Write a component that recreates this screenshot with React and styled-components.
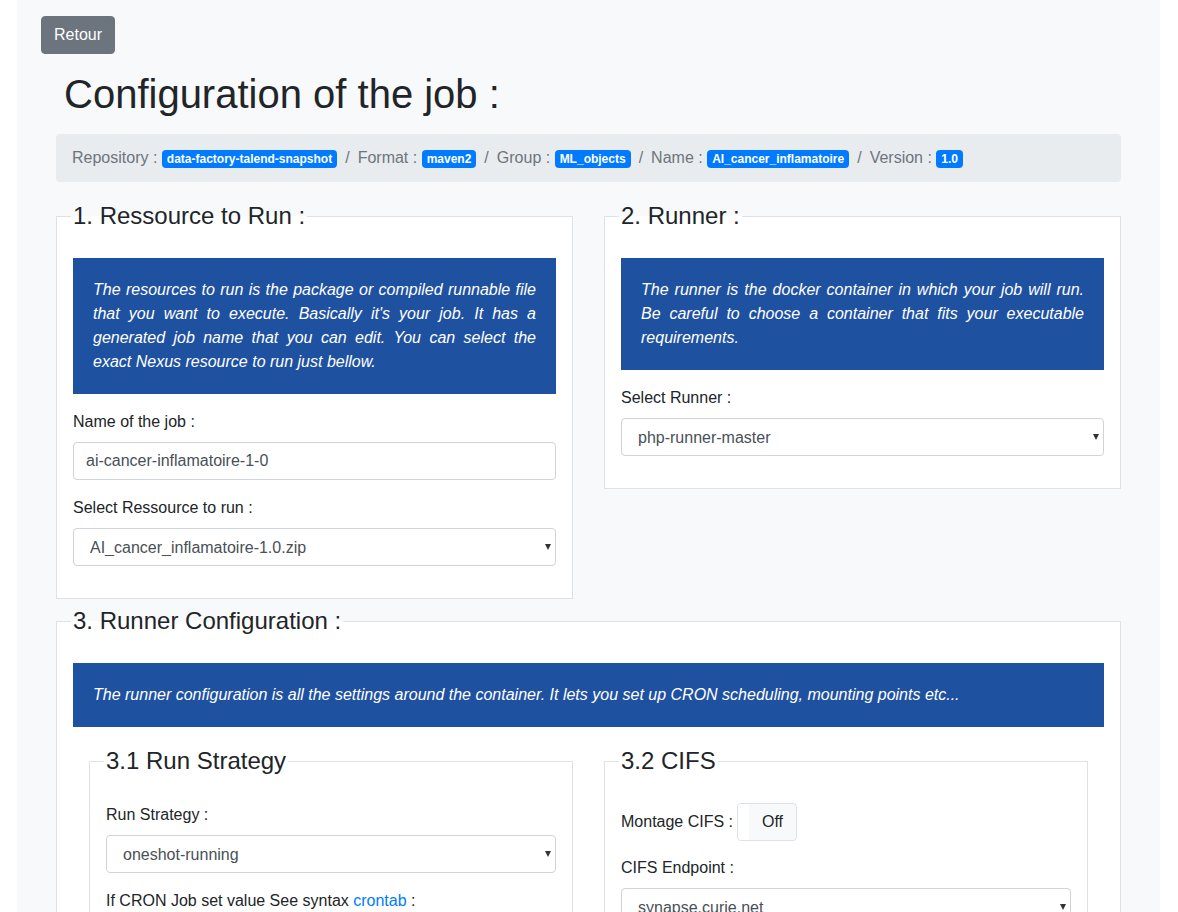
import React, { useState } from "react";
import styled, { createGlobalStyle } from "styled-components";

const GlobalStyle = createGlobalStyle`
  * { box-sizing: border-box; }
  body {
    margin: 0;
    background: #fff;
    font-family: "Liberation Sans", Arial, sans-serif;
    font-size: 16px;
    line-height: 1.5;
    color: #212529;
  }
`;

const Page = styled.div`
  margin-left: 17px;
  width: 1143px;
  min-height: 100vh;
  background: #f8f9fa;
  padding: 16px 24px 40px;
`;

const BackButton = styled.button`
  display: block;
  font-family: inherit;
  font-size: 16px;
  line-height: 24px;
  color: #fff;
  background: #6c757d;
  border: 1px solid #6c757d;
  border-radius: 4px;
  padding: 6px 12px;
  cursor: pointer;
`;

const Container = styled.div`
  padding: 0 15px;
`;

const Title = styled.h1`
  font-size: 40px;
  font-weight: 400;
  line-height: 48px;
  margin: 16px 0 16px 8px;
`;

const Breadcrumb = styled.ol`
  display: flex;
  flex-wrap: wrap;
  list-style: none;
  margin: 0 0 16px;
  padding: 12px 16px;
  background: #e9ecef;
  border-radius: 4px;
  color: #6c757d;
`;

const Crumb = styled.li`
  & + &::before {
    content: "/";
    padding: 0 8px;
  }
`;

const Badge = styled.span`
  display: inline-block;
  font-size: 12px;
  font-weight: 700;
  line-height: 1;
  padding: 3px 5px;
  color: #fff;
  background: #007bff;
  border-radius: 4px;
  vertical-align: baseline;
`;

const Row = styled.div`
  display: grid;
  grid-template-columns: 1fr 1fr;
  column-gap: 31px;
  align-items: start;
  margin-bottom: ${(p) => p.$mb || 0}px;
  padding: 0 ${(p) => p.$inset || 0}px;
`;

const Fieldset = styled.fieldset`
  margin: 0;
  min-width: 0;
  padding: 16px;
  background: #fff;
  border: 1px solid #dee2e6;
`;

const Legend = styled.legend`
  font-size: 24px;
  line-height: 36px;
  padding: 0 2px;
  margin: 0 0 8px -2px;
`;

const Info = styled.div`
  background: #1f51a1;
  color: #fff;
  font-style: italic;
  text-align: justify;
  padding: 20px;
  margin-bottom: 16px;
`;

const Group = styled.div`
  margin-bottom: 16px;
`;

const Label = styled.label`
  display: block;
  margin-bottom: 8px;
`;

const Link = styled.a`
  color: #007bff;
  text-decoration: none;
`;

const Input = styled.input`
  display: block;
  width: 100%;
  height: 38px;
  padding: 6px 12px;
  font-family: inherit;
  font-size: 16px;
  color: #495057;
  background: #fff;
  border: 1px solid #ced4da;
  border-radius: 4px;
`;

const SelectWrap = styled.div`
  position: relative;
  &::after {
    content: "";
    position: absolute;
    right: 5px;
    top: 16px;
    border-left: 3.5px solid transparent;
    border-right: 3.5px solid transparent;
    border-top: 6px solid #333;
    pointer-events: none;
  }
`;

const Select = styled.select`
  display: block;
  width: 100%;
  height: 38px;
  padding: 6px 24px 6px 16px;
  font-family: inherit;
  font-size: 16px;
  color: #495057;
  background: #fff;
  border: 1px solid #ced4da;
  border-radius: 4px;
  appearance: none;
`;

const ToggleRow = styled.div`
  display: flex;
  align-items: center;
  gap: 4px;
  margin-bottom: 15px;
`;

const Toggle = styled.button`
  display: flex;
  width: 60px;
  height: 38px;
  padding: 0;
  border: 1px solid #dee2e6;
  border-radius: 4px;
  overflow: hidden;
  background: #f8f9fa;
  cursor: pointer;
  font-family: inherit;
  font-size: 16px;
  color: #212529;
`;

const Handle = styled.span`
  width: 11px;
  height: 100%;
  background: #fff;
`;

const ToggleText = styled.span`
  flex: 1;
  line-height: 36px;
  text-align: center;
`;

const Field = ({ label, children }) => (
  <Group>
    <Label>{label}</Label>
    {children}
  </Group>
);

const Dropdown = ({ value, options }) => (
  <SelectWrap>
    <Select defaultValue={value}>
      {options.map((o) => (
        <option key={o}>{o}</option>
      ))}
    </Select>
  </SelectWrap>
);

const crumbs = [
  ["Repository", "data-factory-talend-snapshot"],
  ["Format", "maven2"],
  ["Group", "ML_objects"],
  ["Name", "AI_cancer_inflamatoire"],
  ["Version", "1.0"],
];

export default function App() {
  const [cifs, setCifs] = useState(false);

  return (
    <>
      <GlobalStyle />
      <Page>
        <BackButton>Retour</BackButton>
        <Container>
          <Title>Configuration of the job :</Title>
          <Breadcrumb>
            {crumbs.map(([k, v]) => (
              <Crumb key={k}>
                {k} : <Badge>{v}</Badge>
              </Crumb>
            ))}
          </Breadcrumb>

          <Row $mb={4}>
            <Fieldset>
              <Legend>1. Ressource to Run :</Legend>
              <Info>
                The resources to run is the package or compiled runnable file that you want to
                execute. Basically it's your job. It has a generated job name that you can edit.
                You can select the exact Nexus resource to run just bellow.
              </Info>
              <Field label="Name of the job :">
                <Input defaultValue="ai-cancer-inflamatoire-1-0" />
              </Field>
              <Field label="Select Ressource to run :">
                <Dropdown
                  value="AI_cancer_inflamatoire-1.0.zip"
                  options={["AI_cancer_inflamatoire-1.0.zip"]}
                />
              </Field>
            </Fieldset>

            <Fieldset>
              <Legend>2. Runner :</Legend>
              <Info>
                The runner is the docker container in which your job will run. Be careful to
                choose a container that fits your executable requirements.
              </Info>
              <Field label="Select Runner :">
                <Dropdown value="php-runner-master" options={["php-runner-master"]} />
              </Field>
            </Fieldset>
          </Row>

          <Fieldset>
            <Legend>3. Runner Configuration :</Legend>
            <Info>
              The runner configuration is all the settings around the container. It lets you set
              up CRON scheduling, mounting points etc...
            </Info>
            <Row $inset={16}>
              <Fieldset>
                <Legend>3.1 Run Strategy</Legend>
                <Field label="Run Strategy :">
                  <Dropdown
                    value="oneshot-running"
                    options={["oneshot-running", "cron-running"]}
                  />
                </Field>
                <Field
                  label={
                    <>
                      If CRON Job set value See syntax <Link href="#">crontab</Link> :
                    </>
                  }
                >
                  <Input defaultValue="" />
                </Field>
              </Fieldset>

              <Fieldset>
                <Legend>3.2 CIFS</Legend>
                <ToggleRow>
                  <span>Montage CIFS :</span>
                  <Toggle onClick={() => setCifs(!cifs)}>
                    <Handle />
                    <ToggleText>{cifs ? "On" : "Off"}</ToggleText>
                  </Toggle>
                </ToggleRow>
                <Field label="CIFS Endpoint :">
                  <Dropdown value="synapse.curie.net" options={["synapse.curie.net"]} />
                </Field>
              </Fieldset>
            </Row>
          </Fieldset>
        </Container>
      </Page>
    </>
  );
}
